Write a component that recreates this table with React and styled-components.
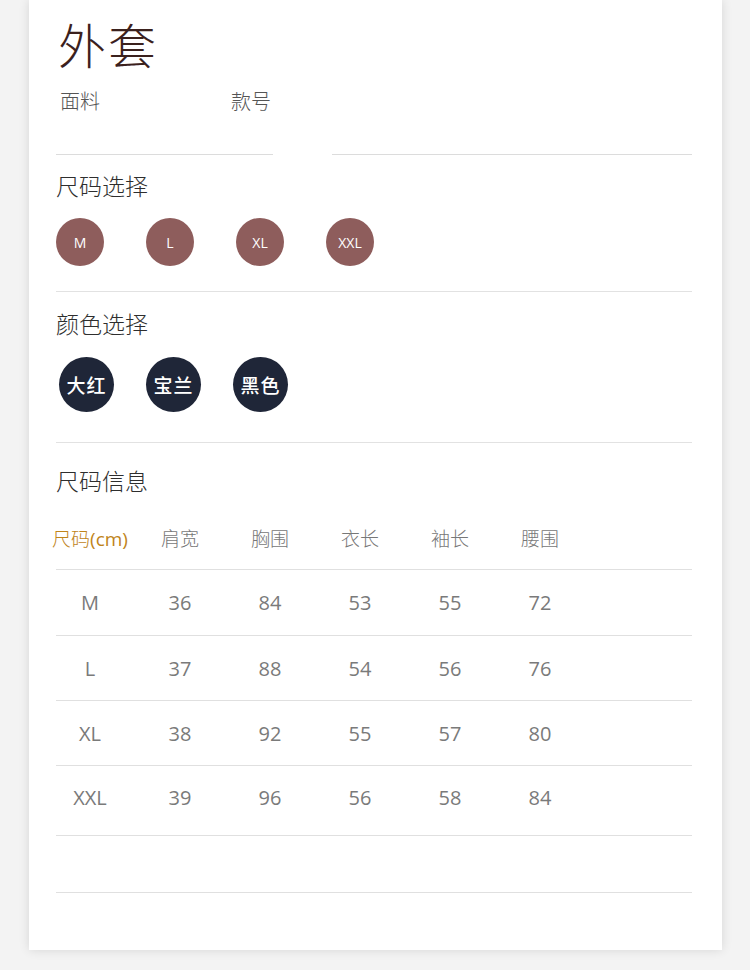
import styled, { createGlobalStyle } from "styled-components"

const GlobalStyle = createGlobalStyle`
    html, body {
        margin: 0;
        padding: 0;
        background: #fff;
    }
    body {
        font-family: "Noto Sans CJK SC", "Noto Sans", sans-serif;
    }
`

const PAGE = styled.div`
    background: #f3f3f3;
    height: 970px;
    padding: 0 28px 0 29px;
    box-sizing: border-box;
`

const CARD = styled.section`
    background: #fff;
    height: 950px;
    box-sizing: border-box;
    padding: 20px 30px 0 27px;
    box-shadow: 0 0 10px rgba(0, 0, 0, 0.12);
    display: flex;
    flex-direction: column;
`

const TITLE = styled.h1`
    margin: 0 0 0 2px;
    font-size: 48px;
    line-height: 46px;
    font-weight: 300;
    color: #3b211d;
    letter-spacing: 2px;
`

const META = styled.div`
    display: flex;
    margin-top: 22px;
    padding-left: 4px;
`

const META_LABEL = styled.span`
    width: ${props => props.width}px;
    font-size: 20px;
    line-height: 26px;
    font-weight: 300;
    color: #555;
`

const META_LINES = styled.div`
    display: flex;
    gap: 59px;
    margin-top: 40px;
`

const UNDERLINE = styled.div`
    height: 1px;
    background: #dcdcdc;
    width: ${props => props.width ? props.width + "px" : "auto"};
    flex: ${props => props.width ? "none" : "1"};
`

const HEADING = styled.h2`
    margin: ${props => props.top}px 0 0;
    font-size: 23px;
    line-height: 30px;
    font-weight: 300;
    color: #2e2e2e;
`

const CHIPS = styled.div`
    display: flex;
    gap: ${props => props.gap}px;
    margin-top: ${props => props.top}px;
    padding-left: ${props => props.indent || 0}px;
`

const SIZE_CHIP = styled.div`
    width: 48px;
    height: 48px;
    border-radius: 50%;
    background: #8e5d5c;
    color: #fff;
    display: flex;
    align-items: center;
    justify-content: center;
    font-family: "Open Sans", sans-serif;
    font-size: 14px;
`

const COLOR_CHIP = styled.div`
    width: 55px;
    height: 55px;
    border-radius: 50%;
    background: #1f2638;
    color: #fff;
    display: flex;
    align-items: center;
    justify-content: center;
    font-size: 19px;
    font-weight: 500;
    letter-spacing: 1px;
`

const DIVIDER = styled.div`
    height: 1px;
    background: #e2e2e2;
    margin-top: ${props => props.top}px;
`

const TABLE = styled.div`
    margin-top: 11px;
`

const ROW_LINE = styled.div`
    border-bottom: 1px solid #e0e0e0;
`

const GRID = styled.div`
    display: grid;
    grid-template-columns: repeat(6, 90px);
    align-items: center;
    height: ${props => props.height}px;
    padding-bottom: ${props => props.pad || 0}px;
    box-sizing: border-box;
    margin-left: -11px;
`

const HEAD_CELL = styled.div`
    text-align: center;
    font-size: 19px;
    font-weight: 300;
    color: ${props => props.accent ? "#c0841a" : "#777"};
    white-space: nowrap;

    span {
        font-family: "Open Sans", sans-serif;
        font-weight: 400;
    }
`

const CELL = styled.div`
    text-align: center;
    font-family: "Open Sans", sans-serif;
    font-size: 20px;
    color: #7a7a7a;
`

const sizes = ["M", "L", "XL", "XXL"]
const colors = ["大红", "宝兰", "黑色"]
const columns = ["肩宽", "胸围", "衣长", "袖长", "腰围"]
const rows = [
    ["M", 36, 84, 53, 55, 72],
    ["L", 37, 88, 54, 56, 76],
    ["XL", 38, 92, 55, 57, 80],
    ["XXL", 39, 96, 56, 58, 84],
]
// row heights without the border line
const rowHeights = [65, 64, 64, 69]

function App () {
    return (
        <>
            <GlobalStyle />
            <PAGE>
                <CARD>
                    <TITLE>外套</TITLE>
                    <META>
                        <META_LABEL width={171}>面料</META_LABEL>
                        <META_LABEL>款号</META_LABEL>
                    </META>
                    <META_LINES>
                        <UNDERLINE width={217} />
                        <UNDERLINE />
                    </META_LINES>

                    <HEADING top={15}>尺码选择</HEADING>
                    <CHIPS gap={42} top={18}>
                        { sizes.map(s => <SIZE_CHIP key={s}>{ s }</SIZE_CHIP>) }
                    </CHIPS>
                    <DIVIDER top={25} />

                    <HEADING top={16}>颜色选择</HEADING>
                    <CHIPS gap={32} top={19} indent={3}>
                        { colors.map(c => <COLOR_CHIP key={c}>{ c }</COLOR_CHIP>) }
                    </CHIPS>
                    <DIVIDER top={30} />

                    <HEADING top={22}>尺码信息</HEADING>
                    <TABLE>
                        <ROW_LINE>
                            <GRID height={63}>
                                <HEAD_CELL accent>尺码<span>(cm)</span></HEAD_CELL>
                                { columns.map(c => <HEAD_CELL key={c}>{ c }</HEAD_CELL>) }
                            </GRID>
                        </ROW_LINE>
                        { rows.map((r, i) => (
                            <ROW_LINE key={r[0]}>
                                <GRID height={rowHeights[i]} pad={i === rows.length - 1 ? 6 : 0}>
                                    { r.map((v, j) => <CELL key={j}>{ v }</CELL>) }
                                </GRID>
                            </ROW_LINE>
                        )) }
                        <ROW_LINE>
                            <GRID height={56} />
                        </ROW_LINE>
                    </TABLE>
                </CARD>
            </PAGE>
        </>
    )
}

export default App
